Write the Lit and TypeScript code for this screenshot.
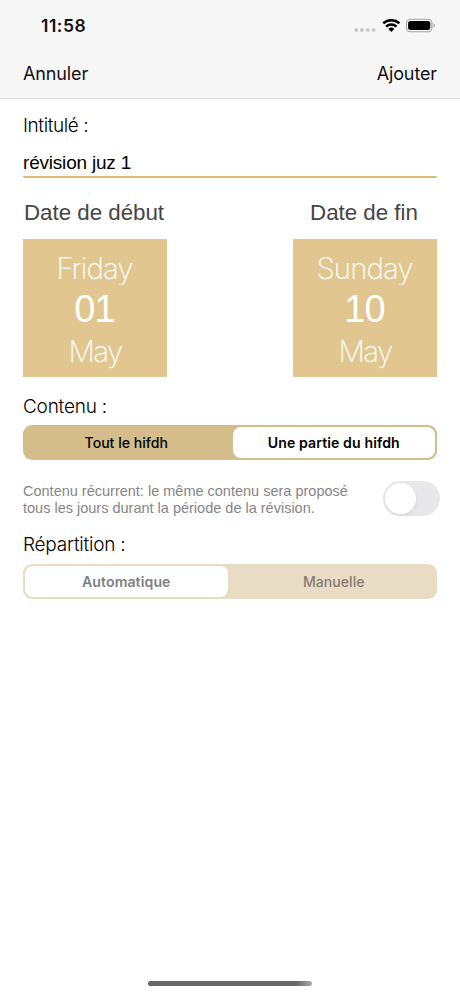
import { LitElement, html, css } from "lit";
import { customElement, property } from "lit/decorators.js";
import { classMap } from "lit/directives/class-map.js";

@customElement("status-bar")
class StatusBar extends LitElement {
  static styles = css`
    :host { display: flex; height: 50px; padding: 0 21px 0 41px; justify-content: space-between; align-items: center; }
    .time { font-size: 17.5px; font-weight: 600; line-height: 22px; letter-spacing: 0.5px; padding-top: 1px; color: #111; }
    svg { display: block; }
  `;
  render() {
    return html`
      <span class="time">11:58</span>
      <svg width="86" height="20" viewBox="0 0 86 20">
        <g fill="#c9c9cb">
          <circle cx="3.3" cy="15" r="2" /><circle cx="9" cy="15" r="2" />
          <circle cx="14.8" cy="15" r="2" /><circle cx="20.5" cy="15" r="2" />
        </g>
        <g fill="none" stroke="#000" stroke-width="2.5">
          <path d="M30.2 8.3a12.2 12.2 0 0 1 16.2 0" />
          <path d="M33.1 11.6a7.6 7.6 0 0 1 10.4 0" />
        </g>
        <path d="M35.3 13.9a4.4 4.4 0 0 1 6 0l-3 3.1z" />
        <rect x="53.5" y="4.3" width="25.4" height="12.4" rx="3.8" fill="none" stroke="#a3a3a5" stroke-width="1.1" />
        <rect x="55.1" y="5.9" width="22.2" height="9.2" rx="2.3" />
        <path d="M80.5 8.5c1.9.6 1.9 3.6 0 4.2z" fill="#a3a3a5" />
      </svg>
    `;
  }
}

@customElement("date-card")
class DateCard extends LitElement {
  @property() label = "";
  @property() weekday = "";
  @property() day = "";
  @property() month = "";
  static styles = css`
    :host { display: flex; flex-direction: column; align-items: center; width: 144px; }
    .label { font: 22.3px/28px "Liberation Sans", Arial, sans-serif; color: #454547; height: 39.5px; padding-top: 0.5px; margin-right: 2px; white-space: nowrap; }
    .card { width: 144px; height: 138px; background: #e1c78f; color: #fff; display: flex; flex-direction: column; align-items: center; }
    .thin { font-weight: 200; font-size: 29.5px; line-height: 42px; height: 42px; }
    .weekday { padding-top: 8px; letter-spacing: -1px; margin-right: 1px; }
    .day { font: 38px/40px "Liberation Sans", Arial, sans-serif; letter-spacing: -1px; margin-right: 1px; }
    .month { padding-top: 1px; height: 41px; letter-spacing: -1.6px; }
  `;
  render() {
    return html`
      <span class="label">${this.label}</span>
      <div class="card">
        <span class="thin weekday">${this.weekday}</span>
        <span class="day">${this.day}</span>
        <span class="thin month">${this.month}</span>
      </div>
    `;
  }
}

@customElement("segmented-control")
class SegmentedControl extends LitElement {
  @property({ type: Array }) options: string[] = [];
  @property({ type: Number }) selected = 0;
  @property({ type: Boolean, reflect: true }) disabled = false;
  static styles = css`
    :host { display: flex; gap: 5px; box-sizing: border-box; height: 35px; padding: 2px; border-radius: 9px; background: #d4bc8b; color: #000; }
    :host([disabled]) { background: #e9dcc5; color: #867d70; }
    .seg { flex: 1 1 0; min-width: 0; display: flex; align-items: center; justify-content: center; font-size: 14.1px; font-weight: 500; border-radius: 8px; white-space: nowrap; }
    .on { background: #fff; font-weight: 600; letter-spacing: 0.1px; }
    :host([disabled]) .on { color: #808082; }
  `;
  render() {
    return this.options.map(
      (text, i) => html`<div class=${classMap({ seg: true, on: i === this.selected })}>${text}</div>`
    );
  }
}

@customElement("app-root")
class AppRoot extends LitElement {
  static styles = css`
    :host { display: flex; flex-direction: column; height: 996px; background: #fff; color: #000; font-family: Inter, sans-serif; }
    .top { background: #f7f7f8; border-bottom: 1px solid #dededf; height: 97.5px; }
    .nav { display: flex; justify-content: space-between; padding: 0 23px; font-size: 18px; line-height: 48px; letter-spacing: -0.12px; color: #111; }
    main { flex: 1; padding: 0 23px; }
    .heading { font-size: 19px; font-weight: 300; line-height: 26px; letter-spacing: -0.22px; }
    .first { padding-top: 14px; letter-spacing: -0.4px; }
    .field { font: 19px/26px "Liberation Sans", Arial, sans-serif; letter-spacing: -0.2px; height: 26px; padding-top: 11px; border-bottom: 2px solid #ddb878; border-radius: 2px; }
    .dates { display: flex; justify-content: space-between; padding-top: 21px; height: 178px; }
    .content { padding-top: 17px; height: 31px; }
    .recur { display: flex; justify-content: space-between; height: 35px; padding-top: 21px; margin-right: -3px; }
    .note { font: 14.5px/17px "Liberation Sans", Arial, sans-serif; color: #858587; padding-top: 2px; white-space: nowrap; }
    .switch { width: 57px; height: 35px; border-radius: 18px; background: #e8e8ea; display: flex; align-items: center; }
    .knob { width: 31px; height: 31px; margin-left: 2px; border-radius: 50%; background: #fff; box-shadow: 0 2px 4px #0001; }
    .split { padding-top: 16px; height: 32px; }
    .home { align-self: center; width: 164px; height: 5px; margin-bottom: 10px; border-radius: 3px; background: linear-gradient(90deg, #666 90%, #aaa); }
  `;
  render() {
    return html`
      <div class="top">
        <status-bar></status-bar>
        <div class="nav"><span class="cancel">Annuler</span><span class="add">Ajouter</span></div>
      </div>
      <main>
        <div class="heading first">Intitulé :</div>
        <div class="field">révision juz 1</div>
        <div class="dates">
          <date-card label="Date de début" weekday="Friday" day="01" month="May"></date-card>
          <date-card label="Date de fin" weekday="Sunday" day="10" month="May"></date-card>
        </div>
        <div class="heading content">Contenu :</div>
        <segmented-control .options=${["Tout le hifdh", "Une partie du hifdh"]} selected="1"></segmented-control>
        <div class="recur">
          <div class="note">Contenu récurrent: le même contenu sera proposé<br />tous les jours durant la période de la révision.</div>
          <div class="switch"><div class="knob"></div></div>
        </div>
        <div class="heading split">Répartition :</div>
        <segmented-control .options=${["Automatique", "Manuelle"]} selected="0" disabled></segmented-control>
      </main>
      <div class="home"></div>
    `;
  }
}
